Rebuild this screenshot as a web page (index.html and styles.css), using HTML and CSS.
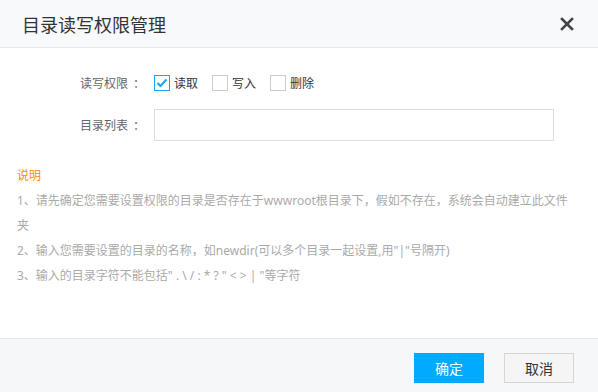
FILE: index.html
```html
<!DOCTYPE html>
<html lang="zh">
<head>
    <meta charset="UTF-8">
    <title>目录读写权限管理</title>
    <link rel="stylesheet" href="styles.css">
</head>
<body>
    <div class="dialog">
        <!-- 标题栏 -->
        <div class="dialog-head">
            <h2 class="dialog-title">目录读写权限管理</h2>
            <span class="close">
                <svg width="14" height="14" viewBox="0 0 14 14"><path d="M2 2 L12 12 M12 2 L2 12" stroke="#444" stroke-width="2.6" stroke-linecap="square"/></svg>
            </span>
        </div>

        <div class="dialog-body">
            <div class="form-row">
                <label class="form-label">读写权限<span class="colon">：</span></label>
                <div class="checks">
                    <span class="check-item"><i class="checkbox checked"><svg width="12" height="10" viewBox="0 0 12 10"><path d="M1.5 5 L4.5 8 L10.5 1.5" fill="none" stroke="#1aa3ee" stroke-width="2"/></svg></i>读取</span>
                    <span class="check-item"><i class="checkbox"></i>写入</span>
                    <span class="check-item"><i class="checkbox"></i>删除</span>
                </div>
            </div>
            <div class="form-row">
                <label class="form-label">目录列表<span class="colon">：</span></label>
                <input class="text-input" type="text">
            </div>

            <!-- 说明 -->
            <div class="notes">
                <p class="notes-title">说明</p>
                <p>1、请先确定您需要设置权限的目录是否存在于wwwroot根目录下，假如不存在，系统会自动建立此文件夹</p>
                <p>2、输入您需要设置的目录的名称，如newdir(可以多个目录一起设置,用"|"号隔开)</p>
                <p>3、输入的目录字符不能包括" . \ / : * ? " &lt; &gt; | "等字符</p>
            </div>
        </div>

        <div class="dialog-foot">
            <button class="btn btn-primary">确定</button>
            <button class="btn">取消</button>
        </div>
    </div>
</body>
</html>
```

FILE: styles.css
```css
body, html {
    margin: 0;
    padding: 0;
    width: 100%;
    height: 100%;
    font-family: "Noto Sans", "Noto Sans CJK SC", sans-serif;
    background-color: #fff;
    overflow: hidden;
}
.dialog {
    display: flex;
    flex-direction: column;
    height: 392px;
}
.dialog-head {
    height: 47px;
    display: flex;
    align-items: center;
    justify-content: space-between;
    padding: 0 24px 0 22px;
    background-color: #f8f9fa;
    border-bottom: 1px solid #e5e7e9;
}
.dialog-title {
    margin: 0;
    font-size: 18px;
    font-weight: normal;
    color: #333;
}
.close {
    display: flex;
}
.dialog-body {
    flex: 1;
    padding-top: 19px;
}
.form-row {
    display: flex;
    align-items: center;
    height: 32px;
    margin-bottom: 10px;
    padding-left: 80px;
}
.form-label {
    width: 74px;
    font-size: 12px;
    color: #666;
}
.colon {
    padding-left: 5px;
}
.checks {
    display: flex;
    align-items: center;
}
.check-item {
    display: flex;
    align-items: center;
    font-size: 12px;
    color: #333;
    margin-right: 14px;
}
.checkbox {
    width: 14px;
    height: 14px;
    border: 1px solid #ccc;
    margin-right: 4px;
    display: flex;
    align-items: center;
    justify-content: center;
    background: #fff;
}
.checkbox.checked {
    border-color: #1aa3ee;
}
.text-input {
    width: 400px;
    height: 32px;
    box-sizing: border-box;
    border: 1px solid #ddd;
    margin: 0;
    outline: none;
}
.notes {
    padding: 0 20px 0 17px;
    margin-top: 22px;
}
.notes p {
    margin: 0;
    font-size: 12px;
    line-height: 25px;
    color: #aaa;
}
.notes .notes-title {
    color: #ff8a00;
}
.dialog-foot {
    height: 54px;
    display: flex;
    justify-content: flex-end;
    align-items: flex-start;
    padding: 14px 24px 0 0;
    box-sizing: border-box;
    background-color: #f5f7f8;
    border-top: 1px solid #e5e7e9;
}
.btn {
    width: 70px;
    height: 30px;
    margin-left: 20px;
    font-size: 14px;
    font-family: inherit;
    color: #333;
    background-color: #f5f5f5;
    border: 1px solid #d6d6d6;
    cursor: pointer;
}
.btn-primary {
    color: #fff;
    background-color: #00aaff;
    border-color: #00aaff;
}
```
